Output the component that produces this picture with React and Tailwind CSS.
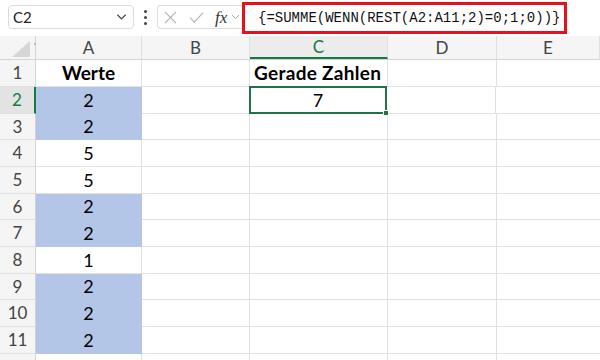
import React from 'react';

const cols = [
  { key: 'A', w: 'w-[106px]' },
  { key: 'B', w: 'w-[108px]' },
  { key: 'C', w: 'w-[138px]' },
  { key: 'D', w: 'w-[109px]' },
  { key: 'E', w: 'flex-1' },
];

const rows = [
  { n: 1, h: 'h-[27px]', a: 'Werte', c: 'Gerade Zahlen', head: true },
  { n: 2, h: 'h-[27px]', a: '2', c: '7', blue: true },
  { n: 3, h: 'h-[26px]', a: '2', blue: true },
  { n: 4, h: 'h-[27px]', a: '5' },
  { n: 5, h: 'h-[27px]', a: '5' },
  { n: 6, h: 'h-[26px]', a: '2', blue: true },
  { n: 7, h: 'h-[27px]', a: '2', blue: true },
  { n: 8, h: 'h-[27px]', a: '1' },
  { n: 9, h: 'h-[26px]', a: '2', blue: true },
  { n: 10, h: 'h-[27px]', a: '2', blue: true },
  { n: 11, h: 'h-[27px]', a: '2', blue: true },
  { n: 12, h: 'h-[27px]', a: '', hideNum: true },
];

const Chevron = ({ className }) => (
  <svg viewBox="0 0 12 8" className={className} fill="none" stroke="currentColor" strokeWidth="1.3">
    <path d="M1.5 1.5 L6 6 L10.5 1.5" />
  </svg>
);

const FormulaBar = () => (
  <div className="flex items-center h-[36px] bg-white relative">
    <div className="ml-[8px] w-[126px] h-[24px] mt-[-2px] border border-[#dcdcdc] rounded-[4px] flex items-center justify-between pl-[4px] pr-[6px] text-[15px] text-[#222]">
      <span>C2</span>
      <Chevron className="w-[11px] h-[8px] text-[#444]" />
    </div>
    <div className="w-[23px] flex flex-col items-center gap-[3px] mt-[-2px]">
      <span className="w-[3px] h-[3px] rounded-full bg-[#444]" />
      <span className="w-[3px] h-[3px] rounded-full bg-[#444]" />
      <span className="w-[3px] h-[3px] rounded-full bg-[#444]" />
    </div>
    <div className="w-[90px] h-[24px] mt-[-2px] border border-[#dcdcdc] rounded-l-[4px] border-r-0 flex items-center pl-[6px]">
      <svg viewBox="0 0 14 14" className="w-[13px] h-[13px] text-[#b0b0b0]" fill="none" stroke="currentColor" strokeWidth="1.2">
        <path d="M1 1 L13 13 M13 1 L1 13" />
      </svg>
      <svg viewBox="0 0 16 12" className="w-[15px] h-[11px] ml-[12px] text-[#b0b0b0]" fill="none" stroke="currentColor" strokeWidth="1.2">
        <path d="M1 6 L5.5 11 L15 1" />
      </svg>
      <span className="ml-[11px] italic text-[17px] text-[#333] font-['Liberation_Serif',serif] leading-none">fx</span>
      <Chevron className="w-[9px] h-[6px] ml-[4px] text-[#999]" />
    </div>
    <div className="absolute left-[242px] top-[2px] w-[325px] h-[32px] border-[3px] border-[#e3121d] bg-white flex items-center pl-[13px] font-['Liberation_Mono',monospace] text-[14px] text-[#111]">
      {'{=SUMME(WENN(REST(A2:A11;2)=0;1;0))}'}
    </div>
  </div>
);

const App = () => {
  return (
    <div className="w-[600px] h-[360px] overflow-hidden bg-white font-['Lato','Noto_Sans',sans-serif]">
      <FormulaBar />
      <div className="flex h-[24px] bg-[#f5f5f5] border-b border-[#d4d4d4]">
        <div className="w-[36px] border-r border-[#d4d4d4] relative">
          <div className="absolute left-[12px] top-[5px] w-0 h-0 border-l-[18px] border-l-transparent border-b-[16px] border-b-[#d6d6d6]" />
          <div className="absolute right-[-1px] top-[7px] w-[2px] h-[2px] bg-[#bbb]" />
        </div>
        {cols.map((c) => (
          <div
            key={c.key}
            className={`${c.w} flex items-center justify-center text-[17px] border-r border-[#e0e0e0] ${
              c.key === 'C' ? 'text-[#107c41] border-b-2 border-b-[#107c41] bg-[#ececec]' : 'text-[#444]'
            }`}
          >
            {c.key}
          </div>
        ))}
      </div>
      {rows.map((r) => (
        <div key={r.n} className={`flex ${r.h}`}>
          <div
            className={`w-[36px] flex items-center justify-center text-[17px] border-b border-[#e0e0e0] ${
              r.n === 2
                ? 'bg-[#e3e3e3] text-[#107c41] border-r-2 border-r-[#107c41]'
                : 'bg-[#f5f5f5] text-[#444] border-r border-r-[#d4d4d4]'
            }`}
          >
            {r.hideNum ? '' : r.n}
          </div>
          <div
            className={`w-[106px] flex items-center justify-center text-black border-r border-b ${
              r.blue ? 'bg-[#b4c6e7] border-[#b4c6e7]' : 'border-[#e1e1e1]'
            } ${r.head ? 'font-bold text-[19px]' : 'text-[18px]'}`}
          >
            {r.a}
          </div>
          <div className="w-[108px] border-r border-b border-[#e1e1e1]" />
          {r.n === 2 ? (
            <div className="w-[138px] relative border-2 border-[#217346] flex items-center justify-center text-[18px] text-black mt-[-1px] ml-[-1px] h-[28px]">
              {r.c}
              <div className="absolute right-[-4px] bottom-[-4px] w-[6px] h-[6px] bg-[#217346] border border-white" />
            </div>
          ) : (
            <div
              className={`w-[138px] flex items-center text-black border-r border-b border-[#e1e1e1] whitespace-nowrap overflow-visible ${
                r.head ? 'font-bold pl-[4px] text-[19px] tracking-[0.3px]' : ''
              }`}
            >
              {r.c}
            </div>
          )}
          <div className="w-[109px] border-r border-b border-[#e1e1e1]" />
          <div className="flex-1 border-b border-[#e1e1e1]" />
        </div>
      ))}
    </div>
  );
};

export default App;
